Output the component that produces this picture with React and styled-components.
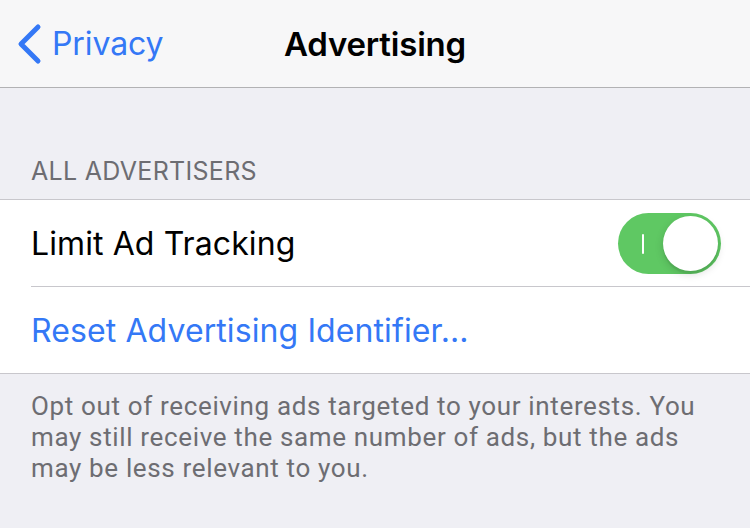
import React from "react";
import styled, { createGlobalStyle } from "styled-components";

const GlobalStyle = createGlobalStyle`
  html, body {
    margin: 0;
    padding: 0;
    background: #efeff4;
    font-family: Inter, "Noto Sans", "Liberation Sans", sans-serif;
    -webkit-font-smoothing: antialiased;
  }
`;

const Page = styled.div`
  width: 750px;
  height: 528px;
  overflow: hidden;
  background: #efeff4;
`;

const NavBar = styled.div`
  height: 88px;
  background: #f7f7f8;
  border-bottom: 1px solid #b2b2b4;
  display: grid;
  grid-template-columns: 1fr auto 1fr;
  align-items: center;
  box-sizing: border-box;
`;

const BackButton = styled.div`
  display: flex;
  align-items: center;
  gap: 10px;
  padding-left: 16px;
  color: #3478f6;
  font-size: 32px;
  letter-spacing: -0.1px;
`;

const Title = styled.div`
  font-size: 33px;
  font-weight: 600;
  color: #000;
  letter-spacing: -0.2px;
`;

const SectionHeader = styled.div`
  padding: 68px 31px 0;
  height: 111px;
  box-sizing: border-box;
  font-size: 25px;
  color: #6d6d72;
  letter-spacing: 0.3px;
  line-height: 30px;
`;

const Group = styled.div`
  background: #fff;
  border-top: 1px solid #c8c7cc;
  border-bottom: 1px solid #c8c7cc;
`;

const Row = styled.div`
  height: 86px;
  margin-left: 31px;
  padding-right: 29px;
  display: flex;
  align-items: center;
  justify-content: space-between;
  border-bottom: ${(p) => (p.$last ? "none" : "1px solid #c8c7cc")};
  font-size: 32px;
  letter-spacing: 0.1px;
  color: ${(p) => (p.$link ? "#3478f6" : "#000")};
`;

const Track = styled.div`
  width: 103px;
  height: 61px;
  border-radius: 31px;
  background: #5fc863;
  position: relative;
  display: flex;
  align-items: center;
  justify-content: flex-end;
  padding: 3px;
  box-sizing: border-box;
`;

const OnMark = styled.span`
  position: absolute;
  left: 24px;
  top: 21px;
  width: 2px;
  height: 20px;
  background: #fff;
  border-radius: 1px;
`;

const Thumb = styled.div`
  width: 55px;
  height: 55px;
  border-radius: 50%;
  background: #fff;
  box-shadow: 0 3px 8px rgba(0, 0, 0, 0.15), 0 3px 1px rgba(0, 0, 0, 0.06);
`;

const Footer = styled.div`
  padding: 17px 31px 0;
  font-size: 26px;
  line-height: 31px;
  color: #6d6d72;
  letter-spacing: 0.65px;
  white-space: nowrap;
  font-family: "Roboto", "Liberation Sans", sans-serif;
`;

const Chevron = () => (
  <svg width="26" height="42" viewBox="0 0 26 42">
    <path
      d="M22 4 L5 21 L22 38"
      fill="none"
      stroke="#3478f6"
      strokeWidth="5"
      strokeLinecap="round"
      strokeLinejoin="round"
    />
  </svg>
);

const Toggle = () => (
  <Track>
    <OnMark />
    <Thumb />
  </Track>
);

export default function App() {
  return (
    <Page>
      <GlobalStyle />
      <NavBar>
        <BackButton>
          <Chevron />
          <span>Privacy</span>
        </BackButton>
        <Title>Advertising</Title>
        <div />
      </NavBar>
      <SectionHeader>ALL ADVERTISERS</SectionHeader>
      <Group>
        <Row>
          <span>Limit Ad Tracking</span>
          <Toggle />
        </Row>
        <Row $link $last>
          <span>Reset Advertising Identifier...</span>
        </Row>
      </Group>
      <Footer>
        Opt out of receiving ads targeted to your interests. You
        <br />
        may still receive the same number of ads, but the ads
        <br />
        may be less relevant to you.
      </Footer>
    </Page>
  );
}
